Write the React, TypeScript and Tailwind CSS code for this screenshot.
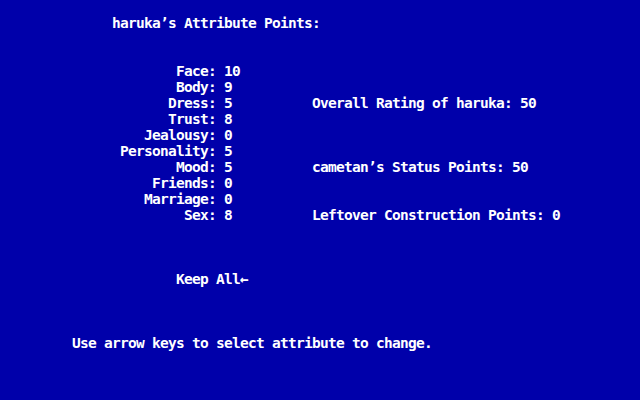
import React from "react";

const attributes: [string, string, string?][] = [
  ["Face", "10"],
  ["Body", "9"],
  ["Dress", "5", "Overall Rating of haruka: 50"],
  ["Trust", "8"],
  ["Jealousy", "0"],
  ["Personality", "5"],
  ["Mood", "5", "cametan’s Status Points: 50"],
  ["Friends", "0"],
  ["Marriage", "0"],
  ["Sex", "8", "Leftover Construction Points: 0"],
];

const App = () => {
  return (
    <div
      className="w-[640px] h-[400px] bg-[#0000aa] text-white font-bold text-[14.5px] tracking-[-0.73px] leading-4 whitespace-pre overflow-hidden"
      style={{ fontFamily: '"DejaVu Sans Mono", "Liberation Mono", monospace' }}
    >
      {/* title */}
      <div className="h-4 mt-[15px] pl-[112px]">haruka’s Attribute Points:</div>

      {/* attribute table + summary on the right */}
      <div className="mt-8 flex flex-col">
        {attributes.map(([label, value, note]) => (
          <div key={label} className="h-4 flex pl-[120px]">
            <span className="w-[96px] text-right">{label}:</span>
            <span className="w-[88px] ml-2">{value}</span>
            {note && <span>{note}</span>}
          </div>
        ))}
      </div>

      <div className="h-4 mt-12 pl-[176px]">Keep All←</div>

      <div className="h-4 mt-12 pl-[72px]">Use arrow keys to select attribute to change.</div>
    </div>
  );
};

export default App;
